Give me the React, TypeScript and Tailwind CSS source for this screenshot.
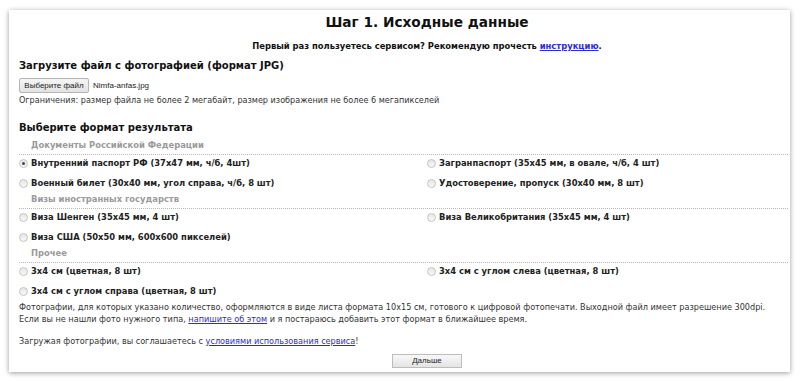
import React from 'react'

const font = { fontFamily: '"DejaVu Sans", Verdana, sans-serif' }

function Radio({ checked = false }: { checked?: boolean }) {
  return (
    <span className="relative inline-flex h-[9px] w-[9px] shrink-0 items-center justify-center rounded-full border border-[#c4c4c4] bg-gradient-to-b from-[#e6e6e6] to-[#f8f8f8]">
      {checked && <span className="h-[3px] w-[3px] rounded-full bg-[#444]" />}
    </span>
  )
}

function Option({ label, checked }: { label: string; checked?: boolean }) {
  return (
    <div className="flex h-[16px] items-center gap-[3px] whitespace-nowrap text-[8.4px] font-bold text-[#222]">
      <Radio checked={checked} />
      <span>{label}</span>
    </div>
  )
}

function Group({ title, rows }: { title: string; rows: [string, string?][] }) {
  return (
    <div>
      <div className="flex h-[18px] items-center border-b border-dotted border-[#b8b8b8] pl-[12px] text-[8.4px] font-bold text-[#9a9a9a]">
        {title}
      </div>
      <div className="flex flex-col gap-[4px]">
        {rows.map(([left, right], i) => (
          <div key={i} className="grid grid-cols-[408px_1fr]">
            <Option label={left} checked={i === 0 && title.startsWith('Документы')} />
            {right ? <Option label={right} /> : <div />}
          </div>
        ))}
      </div>
    </div>
  )
}

export default function App() {
  return (
    <div className="h-[381px] w-[800px] overflow-hidden bg-white pt-[10px] pl-[9px]" style={font}>
      <div className="h-[362px] w-[781px] bg-white pl-[10px] pr-[2px] text-[#333] shadow-[0_1px_5px_rgba(0,0,0,0.4)]">
        <div className="pt-[2px] pl-[47px] text-center">
          <h1 className="h-[20px] text-[13.7px] font-bold leading-[20px] text-[#111]">Шаг 1. Исходные данные</h1>
          <p className="mt-[7px] h-[14px] text-[8.4px] font-bold leading-[14px] text-[#111]">
            Первый раз пользуетесь сервисом? Рекомендую прочесть{' '}
            <a href="#" className="text-[#2b2bd6] underline">инструкцию</a>.
          </p>
        </div>

        <h2 className="mt-[5px] h-[16px] text-[10px] font-bold leading-[16px] text-[#111]">
          Загрузите файл с фотографией (формат JPG)
        </h2>
        <div className="mt-[4px] flex h-[15px] items-center gap-[4px]" style={{ fontFamily: '"Liberation Sans", Arial, sans-serif' }}>
          <button className="h-[15px] w-[70px] rounded-[2px] border border-[#b5b5b5] bg-gradient-to-b from-[#f6f6f6] to-[#e2e2e2] text-[8px] text-[#222]">
            Выберите файл
          </button>
          <span className="text-[8px] text-[#222]">Nimfa-anfas.jpg</span>
        </div>
        <p className="mt-[1px] h-[12px] text-[8.1px] leading-[12px]">
          Ограничения: размер файла не более 2 мегабайт, размер изображения не более 6 мегапикселей
        </p>

        <h2 className="mt-[14px] h-[16px] text-[10px] font-bold leading-[16px] text-[#111]">
          Выберите формат результата
        </h2>
        <div className="mt-[1px]">
          <Group
            title="Документы Российской Федерации"
            rows={[
              ['Внутренний паспорт РФ (37x47 мм, ч/б, 4шт)', 'Загранпаспорт (35x45 мм, в овале, ч/б, 4 шт)'],
              ['Военный билет (30x40 мм, угол справа, ч/б, 8 шт)', 'Удостоверение, пропуск (30x40 мм, 8 шт)'],
            ]}
          />
          <Group
            title="Визы иностранных государств"
            rows={[
              ['Виза Шенген (35x45 мм, 4 шт)', 'Виза Великобритания (35x45 мм, 4 шт)'],
              ['Виза США (50x50 мм, 600x600 пикселей)'],
            ]}
          />
          <Group
            title="Прочее"
            rows={[
              ['3x4 см (цветная, 8 шт)', '3x4 см с углом слева (цветная, 8 шт)'],
              ['3x4 см с углом справа (цветная, 8 шт)'],
            ]}
          />
        </div>

        <div className="mt-[2px] text-[8.15px] leading-[12px]">
          <p className="whitespace-nowrap">
            Фотографии, для которых указано количество, оформляются в виде листа формата 10x15 см, готового к цифровой фотопечати. Выходной файл имеет разрешение 300dpi.
          </p>
          <p>
            Если вы не нашли фото нужного типа,{' '}
            <a href="#" className="text-[#2b2bd6] underline">напишите об этом</a> и я постараюсь добавить этот формат в ближайшее время.
          </p>
          <p className="mt-[10px]">
            Загружая фотографии, вы соглашаетесь с{' '}
            <a href="#" className="text-[#2b2bd6] underline">условиями использования сервиса</a>!
          </p>
        </div>

        <div className="mt-[7px] flex justify-center pl-[47px]">
          <button
            className="h-[14px] w-[70px] border border-[#bdbdbd] bg-gradient-to-b from-[#f8f8f8] to-[#e4e4e4] text-[8px] leading-[12px] text-[#222]"
            style={{ fontFamily: '"Liberation Sans", Arial, sans-serif' }}
          >
            Дальше
          </button>
        </div>
      </div>
    </div>
  )
}
